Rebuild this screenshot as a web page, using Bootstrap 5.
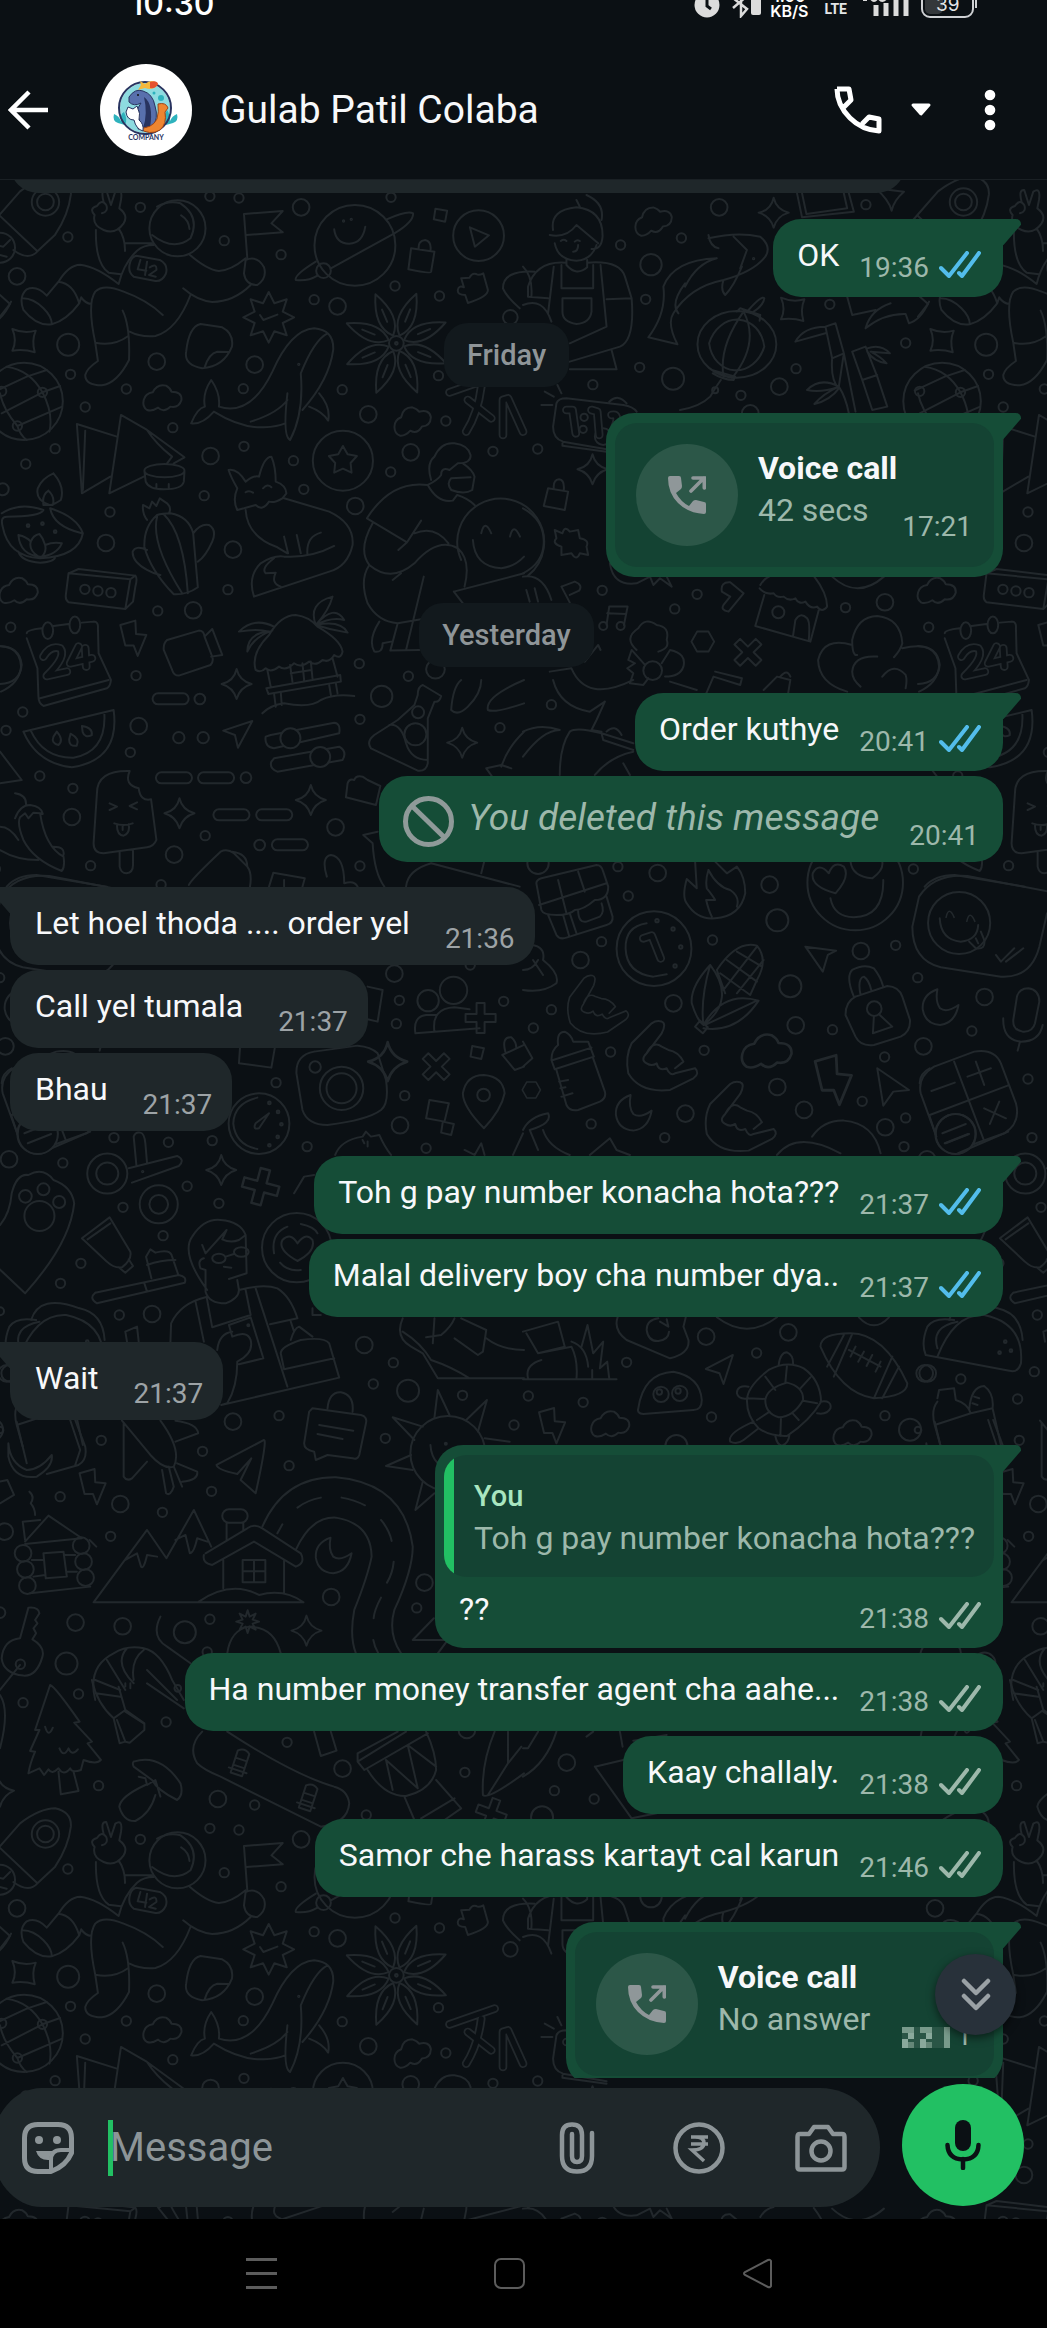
<!DOCTYPE html>
<html lang="en">
<head>
<meta charset="utf-8">
<meta name="viewport" content="width=device-width, initial-scale=1">
<title>Gulab Patil Colaba</title>
<link href="https://cdn.jsdelivr.net/npm/bootstrap@5.3.0/dist/css/bootstrap.min.css" rel="stylesheet">
<style>
:root{--night:#0b1014;--line:#22282c;--out:#154d37;--out-deep:#144333;--in:#1f272a;--soft:#9db8ab;--grey:#8d9598}
body{background:var(--night);color:#f7f8fa;font-family:Roboto,"Liberation Sans",sans-serif;font-size:32px;line-height:40px}
button{background:none;border:0;padding:0;color:inherit}
svg{display:block;flex:none}
.status{height:40px;padding:0 70px 0 130px;font-family:Inter,sans-serif;color:#e3e5e7}
.status .clock-time{font-size:32px;line-height:36px;font-weight:500;margin-top:-14px}
.status .two-line{font-size:16px;line-height:15px;font-weight:600;margin-top:-11px}
.status .lte{font-family:Roboto;font-weight:700;font-size:14px;line-height:14px;margin-top:-12px;text-align:center}
.status svg{margin-top:-12px}
.top-bar{height:140px;padding:0 48px 0 8px;border-bottom:1px solid #1a2024}
.avatar{width:92px;height:92px;background:#fff;overflow:hidden;margin-left:50px}
.contact{font-size:39px;line-height:48px;margin-left:28px}
.dial{gap:28px}
.more{margin-left:49px}
.wall{isolation:isolate;min-height:0}
.paper{top:0;left:0;width:100%;height:100%;z-index:-1;background:var(--night)}
.paper g{fill:none;stroke:var(--line);stroke-width:6;stroke-linejoin:round;stroke-linecap:round}
.paper .solid{fill:var(--night)}
.paper .fat{stroke-width:26}
.paper .core{stroke:var(--night);stroke-width:15}
.log{flex:1 1 0;min-height:0;overflow:hidden;padding:0 44px 0 10px}
.msg{position:relative;border-radius:28px;min-height:78px;margin-top:5px;max-width:86%;flex:none}
.msg p{margin:0;padding:16px 0 22px 24px}
.msg time{font-size:28px;line-height:32px;padding-bottom:10px;align-self:flex-end}
.sent{align-self:flex-end;background:var(--out)}
.sent time{color:var(--soft)}
.got{align-self:flex-start;background:var(--in)}
.got time{color:#9da3a6;padding-left:35px;padding-right:20px}
.got p{padding-left:25px}
.meta{gap:10px;padding:0 22px 0 20px;align-self:flex-end}
.meta time{padding-bottom:13px}
.meta svg{margin-bottom:19px}
.turn{margin-top:25px}
.tail::after{content:"";position:absolute;top:0;width:46px;height:26px;background:inherit}
.sent.tail{border-top-right-radius:0}
.sent.tail::after{right:-18px;border-top-right-radius:5px;clip-path:polygon(0 0,100% 0,100% 22%,62% 100%,0 100%);z-index:-1}
.got.tail{border-top-left-radius:0}
.got.tail::after{left:-18px;clip-path:polygon(0 0,100% 0,100% 100%,38% 100%,0 22%);z-index:-1}
.earlier{width:895px;max-width:none;margin-top:-65px}
.day{align-self:center;background:#12191d;color:#8f9598;font-size:29px;line-height:32px;font-weight:500;padding:16px 23px;border-radius:24px;margin:26px 0 1px}
.first{margin-top:26px}
.after-day{margin-top:25px}
.call{padding:10px 9px}
.call-box{background:var(--out-deep);border-radius:22px;height:144px;padding:0 22px 0 21px}
.ring{width:102px;height:102px;background:#2c5748;margin-right:20px}
.call-box .about{padding-bottom:13px}
.call-box .kind{font-weight:700;line-height:42px}
.call-box .note{color:var(--soft);line-height:42px}
.call-box time{padding-bottom:24px;margin-left:5px}
.call-box .apart{margin-left:32px}
.gone{min-height:86px}
.gone svg{margin:20px 14px 0 24px}
.gone p{font-size:37px;line-height:44px;font-style:italic;color:var(--soft);padding:20px 30px 20px 0}
.gone time{padding-right:24px}
.quote{background:linear-gradient(90deg,#22c063 10px,var(--out-deep) 10px);border-radius:22px;margin:10px 9px 0;padding:19px 19px 19px 30px;height:122px;line-height:42px;color:var(--soft)}
.quote b{color:#a9e6c0;font-weight:500;font-size:29px}
.reply p{padding:12px 0 19px 24px}
.down{right:31px;bottom:184px;width:81px;height:81px;background:#28313a;box-shadow:0 3px 8px #0008}
.compose{padding:6px 23px 12px 0;height:141px;gap:22px}
.field{height:119px;background:var(--in);border-radius:50px 60px 60px 50px / 60px;padding:0 33px 0 30px;margin:4px 0 0 -8px}
.caret{width:5px;height:56px;background:#22c063;margin:0 -3px 0 34px}
.field input{background:none;border:0;outline:0;color:#fff;font-size:40px;line-height:48px;width:10px;padding:0}
.field input::placeholder{color:var(--grey);opacity:1}
.tools{gap:70px}
.mic{width:122px;height:122px;background:#22c063}
.keys{height:109px;background:#000;padding:0 274px 0 246px}
</style>
<script defer src="https://cdn.jsdelivr.net/npm/bootstrap@5.3.0/dist/js/bootstrap.bundle.min.js"></script>
</head>
<body>
<svg width="0" height="0" class="position-absolute" aria-hidden="true">
  <symbol id="ticks" viewBox="0 0 42 27"><path d="M2 17l8 8L28 2M20 22l3 3L40 2" fill="none" stroke="currentColor" stroke-width="4" stroke-linecap="round" stroke-linejoin="round"/></symbol>
  <symbol id="outcall" viewBox="0 0 38 38"><path d="M0 2Q0 0 2 0H11Q13 0 13 2L14 10Q14 12 13 13L8 17Q13 26 21 30L25 25Q26 24 28 24L36 26Q38 26 38 28V36Q38 38 36 38Q20 37 10 27Q0 17 0 2Z" fill="#8f9799"/><path d="M23 15L36 2M25 2H36.300V12" fill="none" stroke="#8f9799" stroke-width="3.600" stroke-linecap="round"/></symbol>
</svg>
<div class="vh-100 d-flex flex-column overflow-hidden">
  <div class="status d-flex align-items-start">
    <span class="clock-time me-auto text-white">10:30</span>
    <svg width="26" height="30" viewBox="0 0 26 30"><circle cx="13" cy="17" r="12.500" fill="#dcdcdc"/><path d="M13 8V18L17 21" stroke="#0b1014" stroke-width="3" fill="none"/></svg>
    <svg class="ms-2" width="34" height="30" viewBox="0 0 34 30"><path d="M5 10L19 21L13 28V3L19 8L5 20" fill="none" stroke="#dcdcdc" stroke-width="2.500"/><rect x="23" y="4" width="10" height="23" rx="2" fill="#dcdcdc"/></svg>
    <span class="two-line text-white text-center ms-2">1.00<br>KB/S</span>
    <span class="lte ms-3">VO<br>LTE</span>
    <svg class="ms-3" width="50" height="30" viewBox="0 0 50 30"><path d="M13 17V28M23 15V28M33 8V28M43 0V28" stroke="#dcdcdc" stroke-width="5"/><path d="M0 12h4M8 11q3 4 6 0M16 11q3 4 7 0" stroke="#dcdcdc" stroke-width="2" fill="none"/></svg>
    <svg class="ms-2" width="56" height="30" viewBox="0 0 56 30" role="img" aria-label="Battery 39"><rect x="1" y="-6" width="51" height="35" rx="8" fill="none" stroke="#cfd1d4" stroke-width="2"/><rect x="4" y="-6" width="18" height="32" rx="5" fill="#34383b"/><path d="M55 10V20" stroke="#cfd1d4" stroke-width="2"/><text x="15" y="23" font-size="19" fill="#e3e5e7">39</text></svg>
  </div>
  <header class="top-bar d-flex align-items-center">
    <button type="button" aria-label="Back"><svg width="42" height="42" viewBox="0 0 42 42"><path d="M40 21H4M21 3L3 21L21 39" fill="none" stroke="#fff" stroke-width="4.500"/></svg></button>
    <div class="avatar rounded-circle">
      <svg width="92" height="92" viewBox="0 0 92 92">
        <circle cx="45" cy="44" r="25" fill="#8ddbe0"/><circle cx="61" cy="34" r="3" fill="#2eb2bd"/><circle cx="54" cy="29" r="1.500" fill="#2eb2bd"/>
        <path d="M18 59Q12 57 14 50Q19 52 21 57Q20 50 24 48Q28 56 25 61ZM73 59Q79 57 77 50Q72 52 70 57Q70 50 67 46Q62 54 66 61Z" fill="#2eb2bd"/>
        <circle cx="45" cy="44" r="26" fill="none" stroke="#28335f" stroke-width="2"/>
        <path d="M29 33Q35 24 43 27Q53 30 55 42Q59 54 52 65H38Q41 52 38 44L41 39Q34 43 29 38Z" fill="#5870ad" stroke="#28335f" stroke-width="1"/>
        <path d="M44 33Q54 40 50 64H43Q48 50 44 33Z" fill="#28335f"/><circle cx="38" cy="31" r="1" fill="#111"/>
        <path d="M58 40Q66 38 68 44L65 48Q67 60 60 66Q50 72 38 64Q52 65 57 55Q59 48 58 40Z" fill="#ee8530" stroke="#9c4518" stroke-width="1"/>
        <path d="M26 48L28 43L33 45L37 42Q41 50 39 56Q44 60 43 67Q36 65 34 56Q27 56 26 48Z" fill="#fff" stroke="#28335f" stroke-width="1"/>
        <path d="M40 17L45 20Q52 14 58 20Q54 27 45 24L38 26L41 21Z" fill="#f5b83d"/><path d="M50 18Q57 16 58 20Q56 25 50 24Z" fill="#e5522f"/>
        <text x="46" y="76" text-anchor="middle" font-size="7" font-weight="700" fill="#28335f" font-family="Lato,sans-serif">COMPANY</text>
      </svg>
    </div>
    <h1 class="contact fw-normal mb-0 me-auto">Gulab Patil Colaba</h1>
    <button type="button" class="dial d-flex align-items-center" aria-label="Voice call"><svg width="48" height="48" viewBox="0 0 48 48"><path d="M3 3H15L17 14L9 22M3 3Q3 19 16 32Q28 44 45 45V33L35 31L28 38" fill="none" stroke="#fff" stroke-width="5" stroke-linejoin="round"/></svg><svg width="22" height="14" viewBox="0 0 22 14"><path d="M3 2H19L11 11Z" fill="#fff" stroke="#fff" stroke-width="3" stroke-linejoin="round"/></svg></button>
    <button type="button" class="more" aria-label="More options"><svg width="18" height="44" viewBox="0 0 18 44" fill="#fff"><circle cx="9" cy="7" r="5.300"/><circle cx="9" cy="22" r="5.300"/><circle cx="9" cy="37" r="5.300"/></svg></button>
  </header>
  <main class="wall position-relative flex-grow-1 d-flex flex-column">
    <svg class="paper position-absolute" aria-hidden="true"><defs><g id="doodles"></g></defs>
      <use href="#doodles" y="-180"/><use href="#doodles" x="-918" y="-180"/><use href="#doodles" x="918" y="-180"/><use href="#doodles" y="1452"/><use href="#doodles" x="918" y="1452"/><use href="#doodles" x="-918" y="1452"/>
    </svg>
    <div class="log d-flex flex-column">
      <div class="msg got earlier"></div>
      <div class="msg sent tail first d-flex"><p>OK</p><span class="meta d-flex align-items-end"><time>19:36</time><svg width="42" height="27" color="#53bdeb"><use href="#ticks"/></svg></span></div>
      <div class="day">Friday</div>
      <div class="msg sent tail after-day call"><div class="call-box d-flex align-items-center"><span class="ring rounded-circle d-flex align-items-center justify-content-center"><svg width="38" height="38"><use href="#outcall"/></svg></span><span class="about d-flex flex-column"><span class="kind">Voice call</span><span class="note">42 secs</span></span><time>17:21</time></div></div>
      <div class="day">Yesterday</div>
      <div class="msg sent tail after-day d-flex"><p>Order kuthye</p><span class="meta d-flex align-items-end"><time>20:41</time><svg width="42" height="27" color="#53bdeb"><use href="#ticks"/></svg></span></div>
      <div class="msg sent gone d-flex"><svg width="51" height="51" viewBox="0 0 51 51"><circle cx="25.500" cy="25.500" r="23" fill="none" stroke="#8f9a99" stroke-width="5"/><path d="M9 10L42 42" stroke="#8f9a99" stroke-width="5"/></svg><p>You deleted this message</p><time>20:41</time></div>
      <div class="msg got tail turn d-flex"><p>Let hoel thoda .... order yel</p><time>21:36</time></div>
      <div class="msg got d-flex"><p>Call yel tumala</p><time>21:37</time></div>
      <div class="msg got d-flex"><p>Bhau</p><time>21:37</time></div>
      <div class="msg sent tail turn d-flex"><p>Toh g pay number konacha hota???</p><span class="meta d-flex align-items-end"><time>21:37</time><svg width="42" height="27" color="#53bdeb"><use href="#ticks"/></svg></span></div>
      <div class="msg sent d-flex"><p>Malal delivery boy cha number dya..</p><span class="meta d-flex align-items-end"><time>21:37</time><svg width="42" height="27" color="#53bdeb"><use href="#ticks"/></svg></span></div>
      <div class="msg got tail turn d-flex"><p>Wait</p><time>21:37</time></div>
      <div class="msg sent tail turn reply"><div class="quote"><b>You</b><br>Toh g pay number konacha hota???</div><div class="d-flex justify-content-between"><p>??</p><span class="meta d-flex align-items-end"><time>21:38</time><svg width="42" height="27" color="#9db8ab"><use href="#ticks"/></svg></span></div></div>
      <div class="msg sent d-flex"><p>Ha number money transfer agent cha aahe...</p><span class="meta d-flex align-items-end"><time>21:38</time><svg width="42" height="27" color="#9db8ab"><use href="#ticks"/></svg></span></div>
      <div class="msg sent d-flex"><p>Kaay challaly.</p><span class="meta d-flex align-items-end"><time>21:38</time><svg width="42" height="27" color="#9db8ab"><use href="#ticks"/></svg></span></div>
      <div class="msg sent d-flex"><p>Samor che harass kartayt cal karun</p><span class="meta d-flex align-items-end"><time>21:46</time><svg width="42" height="27" color="#9db8ab"><use href="#ticks"/></svg></span></div>
      <div class="msg sent tail turn call"><div class="call-box d-flex align-items-center"><span class="ring rounded-circle d-flex align-items-center justify-content-center"><svg width="38" height="38"><use href="#outcall"/></svg></span><span class="about d-flex flex-column"><span class="kind">Voice call</span><span class="note">No answer</span></span>
        <time class="apart d-flex align-items-end"><svg class="mb-1" width="54" height="21" viewBox="0 0 54 21" role="img" aria-label="22:1" shape-rendering="crispEdges"><path d="M0 0H48V21H0Z" fill="#2a5546"/><path d="M0 0H12V6H0ZM18 0H30V6H18ZM42 0H48V21H42Z" fill="#789a8b"/><path d="M6 6H12V12H6ZM24 6H30V12H24ZM0 12H6V21H0ZM18 12H24V21H18Z" fill="#8aa99c"/><path d="M6 15H12V21H6ZM24 15H30V21H24Z" fill="#658778"/></svg>1</time></div></div>
    </div>
    <button type="button" class="down position-absolute rounded-circle d-flex align-items-center justify-content-center" aria-label="Scroll to latest"><svg width="30" height="34" viewBox="0 0 30 34"><path d="M3 3L15 15L27 3M3 18L15 30L27 18" fill="none" stroke="#9aa1a5" stroke-width="4.500" stroke-linecap="round" stroke-linejoin="round"/></svg></button>
    <form class="compose d-flex align-items-start">
      <div class="field flex-grow-1 d-flex align-items-center">
        <button type="button" aria-label="Stickers"><svg width="52" height="52" viewBox="0 0 52 52"><path d="M16 2.500H36Q49.500 2.500 49.500 16V31Q44 44 29 49.500H16Q2.500 49.500 2.500 36V16Q2.500 2.500 16 2.500Z" fill="none" stroke="#8d9598" stroke-width="5" stroke-linejoin="round"/><path d="M29 49V38Q29 28 39 28H49" fill="none" stroke="#8d9598" stroke-width="4"/><path d="M14 29H31Q27 32 28 38Q17 39 14 29Z" fill="#8d9598"/><circle cx="17" cy="18" r="4" fill="#8d9598"/><circle cx="35" cy="18" r="4" fill="#8d9598"/></svg></button>
        <span class="caret"></span><input class="flex-grow-1" type="text" placeholder="Message" aria-label="Message">
        <div class="tools d-flex align-items-center">
          <button type="button" aria-label="Attach" class="me-2"><svg width="36" height="52" viewBox="0 0 36 52"><path d="M33 11V34Q33 49.500 18 49.500Q3 49.500 3 34V13Q3 2.500 13 2.500Q23 2.500 23 13V34Q23 40 18 40Q13 40 13 34V12" fill="none" stroke="#8d9598" stroke-width="4.500" stroke-linecap="round"/></svg></button>
          <button type="button" aria-label="Pay"><svg width="52" height="52" viewBox="0 0 52 52"><circle cx="26" cy="26" r="23.500" fill="none" stroke="#8d9598" stroke-width="4.500"/><path d="M18 15H35M18 22H35M22 15Q31 15 31 21Q31 28 19 28L31 39" fill="none" stroke="#8d9598" stroke-width="3.500"/></svg></button>
          <button type="button" aria-label="Camera"><svg width="52" height="52" viewBox="0 0 52 52"><path d="M5 12H14L19 5H33L38 12H47Q49.500 12 49.500 15V45Q49.500 47.500 47 47.500H5Q2.500 47.500 2.500 45V15Q2.500 12 5 12Z" fill="none" stroke="#8d9598" stroke-width="4.500" stroke-linejoin="round"/><circle cx="26" cy="29" r="9.500" fill="none" stroke="#8d9598" stroke-width="4.500"/></svg></button>
        </div>
      </div>
      <button type="button" class="mic rounded-circle d-flex align-items-center justify-content-center" aria-label="Record voice message"><svg width="36" height="50" viewBox="0 0 36 50"><rect x="10" y="0" width="16" height="31" rx="8" fill="#0b1014"/><path d="M2.500 25Q3 39 18 39.500Q33 39 33.500 25M18 39V48" fill="none" stroke="#0b1014" stroke-width="4.500" stroke-linecap="round"/></svg></button>
    </form>
  </main>
  <nav class="keys d-flex align-items-center justify-content-between" aria-label="System">
    <button type="button" aria-label="Recents"><svg width="31" height="31" viewBox="0 0 31 31"><path d="M0 1.500H31M0 15.500H31M0 29.500H31" stroke="#5c5c5c" stroke-width="3"/></svg></button>
    <button type="button" aria-label="Home"><svg width="31" height="31" viewBox="0 0 31 31"><rect x="1" y="1" width="29" height="29" rx="6" fill="none" stroke="#5c5c5c" stroke-width="2"/></svg></button>
    <button type="button" aria-label="Back"><svg width="31" height="31" viewBox="0 0 31 31"><path d="M29 3V28Q28 30 26 29L3 17Q1 15.500 3 14L26 2Q28 1 29 3Z" fill="none" stroke="#5c5c5c" stroke-width="2"/></svg></button>
  </nav>
</div>
<script>
// The wallpaper is one 918 x 1632 block of line doodles, built in eight cells and repeated by <use>.
const small = 'cloud|M-45 35Q-60 25-55 5Q-50-15-28-18Q-15-45 12-38Q25-30 28-20Q60-20 58 5Q50 30 25 25Q5 45-12 28Q-30 40-45 35Z;bolt|M-40-40L5-53L7-13L38-10L12 53L0 22L-25 22Z;star|M0-45Q8-10 45 0Q10 10 0 45Q-10 10-45 0Q-8-8 0-45Z;gem|M-35-35Q0-20 35-30Q22 0 32 35Q0 25-35 30Q-20 0-35-35Z;plus|M-12-45H12V-12H45V12H12V45H-12V12H-45V-12H-12Z;moon|M-8-52Q-55-35-52 8Q-45 52 0 55Q45 50 55-5Q20 20 0 5Q-15-15-8-52Z;hand|M0-105Q15-100 0-70L-45-10Q-65 10-45 20Q-30 30-15 20Q-10 45 15 35Q25 60 40 50L100 35Q115 50 95 65L25 100Q-65 110-100 50Q-110 0-90-40L-30-100Q-15-110 0-105M-45-10Q-25-50 0-30L20-20Q50-15 65 15L40 35;petal|M0-25C-35-60-25-110 0-160C25-110 35-60 0-25M0-70V-110;seed|M0-20Q22 5 5 20Q-18 15-10-5Z;eye|M-15 15Q-5-30 15 15;hex|M-17-30H17L34 0L17 30H-17L-34 0Z;pod|M-18-35Q0-50 18-35V35H-18ZM-18-12H18M-18 10H18M-28 22H28'.split(';').reduce((o, s) => { const [k, d] = s.split('|'); o[k] = d; return o; }, {});
const burst = (cx, cy, n, R, r) => { let d = 'M'; for (let i = 0; i < 2 * n; i++) { const a = Math.PI * i / n - Math.PI / 2, q = i % 2 ? r : R; d += (cx + q * Math.cos(a)).toFixed(0) + ' ' + (cy + q * Math.sin(a)).toFixed(0) + (i < 2 * n - 1 ? 'L' : 'Z'); } return d; };
const cells = [
{x:0,y:180,
 s:'203,171 420,82 628,49 715,54 671,182 841,224 940,359 1182,318 1315,348 1170,52 211,583 378,627 255,681 728,626 1024,629 517,743 165,806 77,852 730,799 878,842 1169,876 1475,814 1334,723 1312,587 329,996 611,947 909,928 682,1229 472,1293 32,1342 407,1487 1075,1451 1222,1489 254,1228 293,1233 332,1238 127,637 52,738 5,634',
 m:'51,289 1010,379 469,545 762,554 1102,703 630,828 1229,817 317,1089 697,1109 1063,978 578,1291 901,82 968,272,22 204,494,33 8,928,18 1303,1468,28 136,66,41 136,66 0,203,45 531,145,84 1062,196,121 1432,167,76 1186,490,22 72,664,116 1026,842,90 1527,412,22 1028,123,2 1051,118,2 894,553,2 1186,490,4 84,1037,4 127,1031,4 165,1055,4',
 p:['M-20 126L60 34Q120-11 165-11Q215 0 212 44Q205 104 165 164L112 214Q85 244 40 210M0 108L112 214M0 345L30 372L0 410M-35 190L10 200L30 180M-20 220L20 230',
 'M455 165Q520 215 570 175Q600 110 540 70Q505 60 470 80M542 106Q565 120 567 147M310 65Q300 28 318 30L332 75L345 35Q368 20 362 60L357 85Q385 105 370 130Q345 165 310 150Q275 135 283 105Q265 85 290 78Q305 55 318 75Q325 95 305 100M287 150Q285 250 325 278L362 283M355 145Q375 175 374 213M374 190H455M175 305Q205 255 240 254Q290 260 355 312Q370 250 410 212Q430 195 460 195M565 222Q620 270 655 273Q690 272 735 235M735 240Q770 225 790 262Q800 295 770 315Q735 315 730 280ZM750 315Q700 365 635 366Q590 362 548 325M570 345Q530 450 465 468Q420 472 388 455M367 392Q390 440 386 540Q350 610 305 616Q255 616 255 585Q260 565 293 543L285 488Q260 370 285 335Q310 310 370 335Q440 360 487 405M285 488Q340 500 384 468M175 305L140 347Q110 315 80 328Q55 350 70 390Q110 440 155 433Q200 420 237 370L243 352Q255 370 273 372M175 305Q220 310 237 370M68 355Q100 355 130 385Q155 410 155 433',
 'M408 227L478 240Q505 255 496 282Q485 305 465 303L400 290Q380 275 390 245Q395 230 408 227M420 240L412 268L438 272M440 245L434 285M448 262Q470 248 468 270L446 285L466 290M740 235L730 102L846 93L812 130L846 157L737 165',
 'M1000 148Q1005 190 1045 191Q1085 190 1093 140M1157 118Q1220 90 1236 100Q1238 125 1180 160L990 265M945 245Q880 285 885 300Q920 305 950 287M1303 86L1338 92L1332 125L1298 118ZM1406 142L1463 166L1421 200ZM1230 205L1300 215L1290 275Q1288 282 1222 268ZM1253 208Q1250 182 1272 180Q1292 184 1288 212M1380 295L1405 293Q1412 278 1425 282Q1432 288 1446 280L1460 330Q1460 350 1400 369L1392 345Q1368 345 1370 330Q1372 315 1388 322ZM1600 275Q1505 270 1505 325Q1515 350 1555 385',
 burst(804,412,8,76,45)+'M778 405L788 420L830 404M600 432L665 442Q700 460 694 500Q670 560 605 565Q550 555 557 515Q565 440 600 432M612 563Q625 520 650 515L685 516',
 'M572 730Q590 685 613 680Q605 640 632 600Q660 640 655 680Q750 710 815 575Q870 450 940 445Q1000 450 997 510Q985 600 905 690M572 730Q605 735 640 695Q720 745 790 742Q830 740 853 730M980 460Q940 480 900 580Q910 700 868 780Q845 770 860 640M860 660Q830 700 750 725M955 640Q990 680 982 722Q965 695 925 680',
 'M-10 632L80 590L140 570M127 637L180 618M127 637L5 700M52 738L186 680M127 637Q160 700 148 755M20 560Q90 570 127 637M52 738Q10 690 0 640M52 738Q60 765 80 780',
 'M230 732L350 770M230 732L245 940L330 890M255 752L248 930M362 705L327 940L430 890M362 705L440 750L552 832L520 850M440 750Q465 790 515 830L500 850M432 872A60 20 0 0 1 552 872A60 20 0 0 1 432 872L436 905Q445 928 490 928Q545 928 550 905L552 875M468 912V925M505 912V925',
 burst(1026,842,5,44,24),
 'M160 880Q195 920 182 960Q160 975 148 975Q105 960 113 925Q125 895 160 880M145 932Q165 950 158 975L130 975Q125 945 145 932M5 1000Q60 965 130 990Q120 1010 20 1010Q0 1010 8 1040Q25 1130 120 1135Q235 1130 248 1060Q230 1010 150 985Q160 1040 245 1060M55 1065Q80 1070 92 1085Q100 1065 118 1062Q130 1075 135 1095Q160 1085 185 1090Q170 1125 120 1130Q60 1125 55 1065M92 1085Q85 1110 115 1130M135 1095Q140 1115 125 1130M55 1115Q65 1145 120 1148Q165 1145 165 1130',
 'M205 1180L235 1167L405 1187Q412 1195 405 1220L398 1265L375 1287L205 1267Q195 1260 197 1245L205 1180L390 1198L375 1287M390 1198L405 1187M470 1005Q430 1040 432 1100Q450 1170 520 1243Q560 1245 592 1222L578 1060Q565 1010 510 1000Q485 1000 470 1005M470 1010Q450 1090 545 1240M490 1003Q550 1060 562 1240M440 1020Q425 1000 428 975L447 985L455 965L468 978L478 955L500 970Q515 985 505 1000M578 1060Q600 1030 625 1035Q650 1050 635 1085Q615 1130 592 1145M440 1110Q405 1095 397 1115Q395 1145 440 1170Q460 1182 480 1185',
 'M684 870Q710 865 735 905Q760 885 775 890Q790 830 812 830Q825 860 825 905Q855 915 857 940L845 955Q820 970 805 965Q785 995 765 975L730 985L710 990Q695 960 710 925Q690 890 684 870M735 937Q745 930 757 938M787 925Q800 910 812 922M735 990Q740 1070 830 1102L860 1120M850 955L985 995Q1060 1030 1055 1095Q1040 1160 985 1175L760 1250Q740 1190 780 1150Q820 1125 850 1130Q930 1135 1000 1098M850 1070L862 1120M888 1065L900 1120M920 1125Q915 1070 960 1058M820 1135Q780 1165 795 1180L825 1178Q810 1210 840 1220',
 'M1290 900Q1275 850 1300 830Q1320 785 1360 790Q1400 795 1408 825Q1410 850 1370 850L1345 870Q1320 860 1320 885Q1310 900 1280 915M1385 850Q1415 870 1420 890L1413 930Q1390 945 1350 930Q1335 910 1350 895L1408 892M1280 915Q1310 970 1355 962L1368 945Q1400 955 1420 975M1280 915Q1170 900 1098 1015L1218 1087L1260 1022M1115 1030Q1070 1110 1105 1155Q1170 1210 1240 1150Q1310 1070 1370 1105Q1410 1140 1390 1220M1105 1155Q1075 1200 1100 1270Q1130 1325 1190 1330L1260 1318M1240 1060Q1300 1035 1342 1090M1192 1110L1218 1087M1175 1200L1200 1180M1268 1190L1215 1410M1190 1330L1168 1412L1255 1410M1135 1325Q1100 1380 1120 1415Q1145 1420 1145 1390L1170 1385M1380 1140A130 130 0 1 1 1580 1187M1415 1080Q1420 1160 1500 1165Q1540 1160 1568 1130M1358 1235L1568 1180M1358 1235L1385 1270',
 'M80 1360Q80 1350 125 1345M160 1338L205 1332M245 1328L280 1325Q295 1325 293 1345L295 1420L332 1500Q330 1520 320 1525L130 1578Q115 1570 115 1550L112 1465L80 1375M120 1555L325 1500M127 1352A16 25 0 0 1 159 1352A16 25 0 0 1 127 1352M208 1335A16 25 0 0 1 240 1335A16 25 0 0 1 208 1335M500 1380L595 1352Q610 1352 612 1370L635 1430Q640 1445 630 1455L535 1487Q520 1487 515 1470L490 1410Q488 1390 500 1380M612 1370L635 1347L665 1425L632 1430M0 1398Q60 1400 65 1455Q60 1510 0 1512',
 'M765 1470Q750 1420 805 1365Q840 1305 885 1305Q925 1310 950 1340Q1020 1380 1025 1415Q1020 1440 1000 1425Q985 1450 965 1440Q945 1460 925 1445Q900 1465 880 1450Q855 1475 835 1460Q810 1480 795 1465Q780 1480 765 1470M800 1470L810 1520M995 1435L1010 1490M797 1525L1018 1485L1020 1505L803 1542ZM868 1455L875 1505M905 1450L910 1500M930 1445L935 1495M870 1480L932 1470M945 1335Q920 1270 995 1250Q985 1290 945 1335Q1000 1270 1030 1320Q990 1310 945 1335Q1020 1320 1040 1358Q990 1350 945 1335M820 1340Q760 1310 715 1355Q770 1345 805 1355Q740 1360 740 1415Q760 1370 815 1352'],
 f:['M130 1430Q150 1395 180 1405Q200 1430 140 1488L200 1475','M235 1400L210 1450L275 1435M255 1405L258 1460','M1345 637L1480 590M1400 660L1470 715M1440 620Q1430 700 1395 755M1505 765V660L1520 655L1565 755'],
 u:'cloud,485,655 cloud,1232,722,-15 cloud,55,1233 bolt,400,1375 star,708,1512 gem,72,482 eye,1455,1045 eye,1541,1055 petal,1186,490,22 petal,1186,490,67 petal,1186,490,112 petal,1186,490,157 petal,1186,490,202 petal,1186,490,247 petal,1186,490,292 petal,1186,490,337'},
{x:523,y:180,
 s:'292,195 367,358 474,174 1026,74 918,373 817,566 652,646 209,614 349,562 1145,489 44,807 237,1231 454,1287 521,1243 965,1283 240,1338,12 292,1338,12 183,712,11 180,748,11 575,631,9',
 m:'383,254,32 587,82 449,596,33 767,620 1083,1267 764,1297,18 388,1472,28 690,236,2 680,700 240,770',
 p:['M90 150Q80 90 160 82Q240 90 238 170Q235 210 205 207M80 165Q130 175 160 135L225 190M95 190Q105 240 160 242Q205 240 220 195M113 183Q122 176 130 183M155 185Q162 178 170 183M150 215Q165 215 165 195M130 238V255Q160 290 192 262V240M130 248Q40 240 15 320V350L75 355M192 248Q290 240 305 290L325 355L250 358M92 260L75 400M232 255L250 440L140 490M115 255V325H210V255M118 355H205V395Q200 430 160 432Q118 425 118 395ZM325 355Q335 480 290 500L140 545M265 510L280 568H140M0 375Q60 350 85 425M0 260Q30 290 25 350M160 60L170 80M190 45Q245 70 235 120',
 'M555 175Q640 155 710 170Q745 200 725 230Q690 275 600 300Q500 320 450 400Q430 430 462 493L375 472Q430 400 420 320Q450 240 580 235Q520 250 485 320M555 165Q560 200 585 205M630 170L670 210L650 265M600 300Q590 330 605 345Q630 320 655 260M485 310Q440 370 465 400',
 'M522 493A118 100 0 0 1 758 493A118 100 0 0 1 522 493M557 490A85 100 8 0 1 722 500A85 100 8 0 1 557 490M600 590Q585 500 660 395Q710 490 625 595M640 395L650 385L710 405L708 422M675 390Q715 345 722 355Q720 375 690 395M565 570L635 590L630 600Q600 600 568 580M592 600L575 625L560 650Q530 680 470 690',
 'M905 440L935 430L960 520L945 620Q965 650 975 700M905 440L925 535Q920 600 945 625M925 535L960 520M960 520L995 695M905 440Q840 440 815 485L905 460M945 620Q890 590 850 630Q890 640 945 620Q900 640 872 672Q920 660 945 625M985 515L1025 500L1060 590L1090 680L1045 690L1015 600ZM1015 600L1060 585M1030 505Q1070 490 1098 520L1040 515Q1070 530 1088 550Q1050 545 1030 515M970 350L985 405L1055 390M1215 365Q1190 420 1155 430L1145 402Q1080 400 1025 445Q1040 390 1100 370M820 40L835 112L990 95L975 40M835 40L848 102L970 85L960 40M1055 25L1140 35Q1110 60 1103 92Q1095 60 1055 25',
 'M90 740L100 670Q105 655 130 655L300 675Q330 680 340 695M90 740Q90 775 120 785L250 808M118 790V797L250 815M258 665Q285 640 310 670M65 635L92 650M55 675H88M103 615L115 640M75 925L135 935L125 990L62 978ZM92 925Q90 900 108 898Q125 900 122 930M95 1050L118 1060Q125 1035 140 1055L165 1050L170 1075Q200 1080 190 1100L195 1125L170 1120Q160 1145 145 1120L115 1125L115 1100Q85 1090 100 1075ZM0 985Q65 1020 62 1090Q60 1150 0 1180M0 1190Q60 1180 85 1260M10 1230L20 1265M35 1225L45 1265',
 'M595 1235Q590 1205 620 1207L660 1240L615 1295Q590 1290 600 1275L620 1250ZM115 1220L140 1268M115 1220L155 1205Q180 1215 168 1232L140 1245M250 1335L258 1280L313 1280L302 1335M252 1300L308 1302M185 1445L225 1395L232 1410M710 1215Q725 1190 750 1185M870 1188Q910 1240 910 1280Q895 1300 880 1280Q860 1290 845 1265Q825 1275 815 1255Q795 1265 780 1250Q760 1255 750 1240Q725 1245 708 1225M722 1245L695 1338L860 1385L885 1290M808 1368L815 1320Q830 1295 850 1315Q860 1325 855 1382M925 1190Q1000 1260 1080 1190M260 1150Q270 1220 340 1210L380 1190L390 1215L410 1195L445 1220L430 1190',
 'M1000 1425Q985 1430 985 1380Q1000 1310 1060 1308Q1130 1315 1135 1390Q1130 1410 1110 1432M985 1395Q900 1370 883 1440Q885 1510 970 1535M1135 1405Q1240 1380 1245 1460Q1240 1510 1185 1535M1060 1430Q990 1425 985 1475Q985 1500 1010 1520M1075 1490Q1110 1445 1145 1485Q1150 1500 1145 1525M340 1410Q300 1375 345 1345Q365 1310 400 1335Q440 1340 430 1380Q440 1405 405 1415M415 1450L440 1410Q490 1420 480 1460Q470 1490 425 1490M365 1455L325 1410L315 1440L335 1450L312 1465L330 1480L320 1510L360 1515L375 1495M80 1475L145 1465Q190 1570 330 1500M440 1505L520 1530M540 1560L570 1490L650 1515M575 1475L655 1495L650 1515M720 1530L760 1490L800 1500L790 1560M770 1490Q790 1465 800 1490'],
 f:['M130 690L148 690L158 760','M205 690L222 695L228 765','M265 705Q290 700 275 740'],
 u:'cloud,388,122,-15 star,750,98 star,208,868 gem,807,388 hex,538,1385 plus,673,1417,45'},
{x:0,y:680,
 s:'68,96 18,151 119,288 218,325 390,217 598,57,16 535,173,17 608,173,17 736,293,16 614,467 777,495,16 271,557 1077,118 1077,558 482,614 341,1373 188,1449 504,1387 635,1382 560,1519 919,1400 826,1208 1211,1247 1275,1405 1186,1031 1195,961 1507,964 1496,143 1407,855',
 m:'415,138 215,411 521,524 1004,442 1142,49,32 1180,881 1197,1336 27,1438 1251,97,18 1243,163,33 1357,931,41 1281,962,32 1022,1225,65 1022,1225,45 943,1161,17 775,1331,91 1447,1245,19 321,1481,60 321,1481,33 112,1362,60 806,1269,4 832,1296,4 842,1333,4 831,1371,4 806,1396,4 427,1475,2',
 p:['M70 155L340 90Q360 240 215 262Q110 250 70 155M92 152Q130 235 220 233Q320 215 312 97M473 40H548A16 16 0 0 1 548 73H473A16 16 0 0 1 473 40M483 277H558A16 16 0 0 1 558 310H483A16 16 0 0 1 483 277M609 277H684A16 16 0 0 1 684 310H609A16 16 0 0 1 609 277M655 388H730A16 16 0 0 1 730 421H655A16 16 0 0 1 655 388M783 388H858A16 16 0 0 1 858 421H783A16 16 0 0 1 783 388M830 478H905A16 16 0 0 1 905 511H830A16 16 0 0 1 830 478',
 'M810 165L1000 128Q1020 130 1015 160L820 205Q790 200 795 170ZM820 235L1015 200Q1040 215 1025 240L830 275Q805 265 812 245ZM668 152L755 123L712 203L703 165ZM1265 15L1320 48Q1315 68 1300 65L1280 115V250Q1275 275 1250 272L1110 205Q1095 185 1120 165L1190 120L1240 75L1250 45Q1250 20 1265 15M1165 135Q1200 130 1215 190Q1230 240 1280 240M0 215L65 300L0 310',
 'M45 415Q60 375 90 375Q125 380 128 402L120 400Q135 500 190 530Q195 560 185 573Q100 540 70 480Q50 430 60 412L75 400L85 415L100 398L120 400M45 340Q80 345 78 375M0 440Q30 440 55 480M0 510Q50 540 115 540M160 500Q195 500 190 525M290 340Q290 270 388 273Q370 315 415 325Q420 365 452 358L468 480Q460 500 440 502L310 520Q280 520 280 490ZM358 515V560Q362 580 378 580Q398 578 398 555V510M328 370L350 380L328 390M410 367L388 378L410 388M342 430Q370 440 397 430M350 437Q350 465 370 467Q390 460 385 433M367 437V450',
 'M1040 310Q1045 295 1060 300Q1065 285 1085 290L1100 300L1138 318L1125 375L1035 352ZM565 615Q570 600 660 515Q680 505 700 520L740 560Q755 580 748 620M695 515Q740 520 740 560M805 620L818 578L912 595L905 620M850 600V620M978 590Q960 530 990 525Q1030 530 1030 610Q1060 600 1070 620M1130 455L1087 465L1115 490Q1120 580 1150 620M1215 620Q1220 570 1290 550L1555 620M1450 540L1440 580M20 620Q50 585 110 585L320 620',
 'M820 40L825 80M840 35L843 75M785 100Q810 75 850 70Q930 85 960 60Q1000 40 1060 48M985 15L990 45M1005 10L1010 40M1350 90Q1355 20 1380 0M1350 90Q1370 110 1400 80Q1440 40 1440 0M1460 90Q1450 50 1568 0M1460 90Q1480 100 1568 70M1500 260Q1520 200 1568 155M1455 265L1500 255L1530 265M1455 265L1480 300',
 'M1243 1060Q1235 1010 1275 1005L1305 1005M1300 1055Q1290 985 1360 982L1405 988M1243 1060L1435 1045M1100 920L1145 930L1130 1025L1100 1018M940 1115L1070 1097Q1110 1100 1130 1120L1155 1200Q1165 1270 1140 1290Q1100 1320 980 1335Q920 1335 905 1290L887 1180Q885 1125 940 1115M718 1105L715 1150L812 1163L822 1105M770 1253Q700 1270 698 1331Q705 1395 770 1407M805 1300L765 1330Q755 1350 775 1345ZM1413 1098L1448 1105L1440 1137L1408 1130ZM1503 1125L1568 1095M1503 1125L1540 1170L1568 1160M1512 1115Q1500 1070 1530 1072Q1545 1085 1545 1105',
 'M1448 1345Q1385 1280 1385 1240Q1395 1185 1448 1185Q1505 1190 1510 1240Q1500 1290 1448 1345M1285 1260L1343 1270L1330 1325L1275 1315ZM1325 1325L1358 1332L1350 1365L1320 1358ZM1003 1425Q1020 1380 1085 1370L1095 1355L1110 1370L1135 1365Q1150 1400 1170 1425M1085 1380L1090 1390M1100 1385V1400M385 1465L530 1428Q555 1440 535 1458L395 1508M400 1370Q405 1355 420 1358Q432 1360 435 1390L440 1450M400 1370L408 1455M80 1390L150 1362M120 1420L270 1355M35 1310L55 1370M5 1210Q5 1180 35 1165M1565 1360L1535 1425M1390 1410L1420 1425L1440 1390L1450 1425M880 1540L910 1490L940 1485'],
 u:'seed,170,175 seed,218,180,-20 seed,258,153,-40 star,537,400 star,930,360 star,1383,188 star,662,1470 star,1160,1145,0,1.3 plus,1438,1014 plus,1305,1160,45 plus,780,1520,15,1.2',
 c:'869,175,30 958,231,30'},
{x:523,y:680,
 s:'85,74 284,560 315,648 235,785 567,780 1115,796 1168,567 1181,893 85,989 31,1044 262,1116 542,1111 926,1049 1082,1131 1015,1264 1145,1314 1140,1400 204,1332 424,1373 1343,1053 1511,1197',
 m:'403,579 738,614 761,721,33 1011,813 172,840 450,970 800,919,33 816,1036 486,1301 761,1221 841,1290 1084,1342 1198,1099 1381,951 392,806,112 401,722,5 449,747,5 472,801,5 455,858,5 994,608,143 1305,729,93 1051,986,22 45,550,32',
 p:['M0 155Q50 130 110 150Q60 150 0 230M245 65L220 120L205 150L235 155M110 285Q110 200 140 155Q160 140 235 160L330 190M235 160L240 180L330 210M250 155Q275 130 295 165M215 285Q260 230 330 215M90 0Q110 80 200 95L245 65M300 250L320 285',
 'M40 610Q40 600 55 595L220 555Q235 555 240 575L255 620Q255 660 215 660Q180 690 155 690Q140 705 100 705Q60 705 55 690ZM48 675L250 610M105 600L130 700M165 575L185 635M75 705L100 765Q110 780 130 773L250 735Q270 730 268 710L250 650M165 690Q165 730 190 725L230 710Q245 695 235 670M120 705L138 768M140 700L160 760M370 730Q305 740 307 806Q310 880 390 890L430 883',
 'M515 545L520 625L490 597Q475 650 490 670Q520 720 575 715Q650 710 665 640Q665 590 640 560L610 580Q590 560 575 545M555 570Q545 600 550 625Q570 650 575 660L548 660Q555 690 565 710M555 570Q580 620 620 630Q650 650 640 680M920 655Q930 710 990 712Q1080 710 1078 600M935 640Q860 620 867 580Q885 545 915 580Q930 540 960 560Q980 590 935 640M980 545Q985 590 1045 595Q1080 570 1075 545',
 'M1640 648L1330 588Q1230 580 1185 650L1165 740Q1165 840 1250 862L1430 890Q1520 895 1545 800L1568 700M1247 715Q1250 780 1310 785Q1360 780 1362 735M1335 785L1355 805Q1385 810 1380 780L1370 755M1355 775L1362 790M1415 825L1430 845L1470 805M1445 845L1497 805',
 'M560 855Q500 920 505 970Q520 1020 540 1035Q640 960 560 855M560 855Q530 960 540 1035M540 1035Q600 930 705 962Q640 1060 540 1045M545 1035L700 962M580 870Q640 780 700 797Q735 840 700 900L680 945M580 870L605 940M610 840L700 905M590 880L680 945M640 815L715 860M700 800L600 930M720 840L640 940M515 1040L530 1022L553 1042L538 1060ZM845 800L937 812L912 825L897 875Z',
 'M995 950L1090 918Q1125 920 1135 950L1158 1020Q1160 1055 1130 1070L1050 1095Q1010 1100 995 1070L965 1005Q965 965 995 950M990 950Q965 890 985 870Q1020 850 1050 865Q1070 890 1078 920M1010 945Q1000 895 1020 890Q1035 900 1042 930M1050 1008L1047 1060L1105 1040L1065 1003',
 'M105 1095Q100 1055 125 1055Q145 1065 150 1085L195 1085L212 1130L95 1168L85 1140Q85 1110 105 1095M90 1140L205 1103M100 1170L130 1275Q140 1295 165 1290L230 1265Q250 1255 245 1235L210 1135M108 1205L135 1200M115 1250L148 1240M112 1225L127 1222M0 1085L28 1135L0 1160M0 795Q70 790 60 840Q110 880 100 910Q60 940 0 930M200 1425L260 1375L280 1410L320 1425M0 1350Q20 1310 75 1300Q90 1330 20 1350L45 1410M60 1350Q75 1400 140 1425M30 840L60 885M0 870Q30 870 45 840',
 'M1060 1165L1155 1230L1108 1235L1078 1277ZM1230 1160L1350 1115Q1410 1105 1430 1150L1475 1270Q1490 1330 1440 1360L1350 1392M1230 1160Q1180 1190 1190 1240L1235 1365M1290 1145L1378 1378M1217 1305L1450 1217M1222 1233L1292 1208M1330 1190L1400 1165M1355 1145L1380 1215M1380 1285L1445 1315M1425 1265L1397 1332M1478 950Q1485 925 1512 925Q1545 930 1545 965L1532 1030Q1525 1057 1495 1055Q1465 1050 1467 1020ZM1437 1015Q1435 1080 1490 1085Q1545 1085 1555 1035M1487 1085L1480 1112M760 1425Q820 1350 950 1420M865 1370Q900 1320 960 1322Q1050 1330 1070 1420'],
 f:['M360 775L385 767L412 835'],
 u:'cloud,728,1115,0,1.3 moon,1248,980 moon,330,1297 hand,415,1130 hand,220,975,-8,.85 hand,650,1312 eye,1278,700,0,.8 eye,1340,712,0,.8 hex,25,1230,0,.8 bolt,930,1200,0,1.4',
 c:'1295,1362,60', after:'M1255 1360L1325 1332M1265 1390L1335 1362'},
{x:0,y:1180,
 s:'368,82 488,167 655,70 242,250 181,310 357,405 1177,548 1117,612 1384,646 835,707 865,857 606,814 633,934 303,781 180,950 486,997 331,1069 1153,775 1538,735 1247,1284 628,1318 620,1416 61,1453 0,394,12',
 m:'455,402 1090,495 1221,632,33 697,725 360,972 14,1055 991,1251 1270,1208 367,1339 553,1357,33 226,1328 199,1451,33 0,1298,16 118,108,45 76,49,19 130,28,18 177,66,18 475,73,57 475,73,28 888,203,104 1340,820,112 1334,791,3 69,1120 76,1168 82,1217 243,1097 250,1145 256,1193 743,436,3 20,580 0,750,10',
 p:['M0 135Q30 100 35 40Q50-20 85-15Q130-40 160 0Q215 20 222 70Q210 190 75 340L-30 240M245 175L328 112L390 215Q395 240 365 262Q340 265 320 245ZM262 178L330 130M355 262L375 278L398 258L385 238M285 338L535 285Q560 290 553 308L290 370Q265 355 285 338M432 310L440 335M453 295L437 230L450 208L465 218Q510 205 515 230L533 283M440 255Q480 240 525 240M375 455L410 440L415 485M375 455L380 485',
 'M620 330Q540 220 575 170Q610 115 660 120Q720 125 735 165L715 180Q690 190 665 178L678 150L615 220L605 195M735 165L738 280L685 297M635 235A20 14 0 0 1 675 235A20 14 0 0 1 635 235M700 216A22 14 0 0 1 744 216A22 14 0 0 1 700 216M675 230L700 222M670 260L692 263M610 235Q590 240 600 265L615 270V335Q625 370 675 370Q715 355 715 330L710 300M615 352Q540 370 512 430L510 485M585 365L610 485M735 330L750 405L635 442L618 350M715 330Q790 310 830 325Q870 350 890 415L808 433M765 325L860 620M685 435L750 412L788 535L715 553M685 435L695 470Q740 450 750 480Q760 520 710 545Q710 620 680 670L662 675L1015 593L985 490Q970 470 900 480Q840 500 840 520L850 568L1000 535M650 510Q655 460 695 455M870 480Q880 445 895 440L935 470M870 425L880 455',
 'M820 220Q810 160 860 140M900 132Q940 140 950 160M838 248Q860 275 900 270M890 243Q830 210 845 180Q870 155 890 190Q915 155 935 180Q945 215 890 243M935 385V405H960',
 'M50 725L80 850M225 720L255 800Q262 840 235 855L140 882M210 720L240 810L225 855M25 790Q30 850 80 870Q120 870 155 825Q160 860 110 890Q40 900 25 830ZM365 722L450 825Q490 870 520 860Q545 810 480 722M370 730V890Q380 905 395 895L440 845M525 722Q590 730 593 760L525 785M485 870L497 940Q510 950 520 920L505 860M520 860L545 920M530 850L590 875Q595 900 545 905M648 855L790 780Q800 780 765 940L720 900L752 835L710 882Q650 870 648 855',
 'M935 685L1080 705Q1100 710 1095 730L1075 825Q1070 840 1055 835L980 825L945 840L940 815Q910 810 910 790L925 695ZM980 685Q985 635 1020 637Q1060 645 1055 695M955 735L1057 752M950 762L1025 777M1265 740L1175 712L1240 780M1300 712L1310 630L1345 705M1395 720L1457 660L1430 755M1450 775L1525 785M1230 825L1155 858L1235 870M1265 905L1243 990L1300 940M1288 795Q1290 830 1310 850',
 'M1205 415Q1180 470 1230 500L1265 520L1310 595H1568M1205 455Q1260 490 1290 540Q1350 560 1405 595M1300 415L1295 490M1275 472L1320 465Q1350 440 1360 415M1360 475L1430 525L1445 515L1455 450L1380 415M1455 475Q1500 510 1568 510',
 'M280 1267L440 1050L498 1135L580 990L632 1100M280 1267H908M375 1140L410 1120L422 1160Q430 1170 440 1125L470 1130M525 1080L555 1065L568 1120Q580 1120 590 1075L620 1085M615 1120L740 1045Q760 1030 785 1045L900 1120Q915 1150 885 1160L760 1085L635 1155Q605 1150 610 1125M678 1080V1030M728 1050V1030M685 988H721A20 20 0 0 1 721 1028H685A20 20 0 0 1 685 988M668 1140V1225M850 1140V1238M726 1140H794V1207H726ZM760 1140V1207M726 1174H794M595 1265Q690 1200 775 1245Q850 1225 908 1267',
 'M785 1040Q850 890 1005 892Q1210 910 1235 1100Q1235 1170 1180 1290Q1160 1360 1200 1420M885 1110Q930 1010 1005 1013Q1110 1030 1112 1130Q1100 1190 1060 1290Q1045 1370 1065 1420M890 983Q920 960 960 953M1022 953Q1060 960 1092 976M1140 1020Q1165 1050 1172 1083M1178 1145Q1175 1180 1158 1208M1140 1253Q1120 1290 1118 1315M1117 1380Q1120 1400 1132 1420M830 1060L845 1033M1235 1380L1298 1315M1235 1380H1340L1310 1420',
 'M75 1085L145 1007L245 1075L75 1092M75 1080L68 1025L120 1020M88 935Q105 950 92 970Q105 985 105 1005M130 1120L190 1115L200 1190L137 1195ZM90 1240L270 1220M95 1140H128M195 1125H225M100 1190L135 1185M200 1175H230M85 1283Q115 1280 118 1300L105 1320L112 1330L100 1345L108 1360L97 1378Q135 1400 127 1430Q110 1490 70 1487Q10 1480 5 1435Q10 1380 60 1375ZM0 905L22 900L42 945L0 970M0 1530L60 1455',
 'M340 1420Q380 1395 430 1405Q480 1415 515 1500L550 1560M340 1420Q260 1460 285 1560M285 1500L360 1530M320 1440L375 1530M380 1405Q340 1450 400 1510M430 1410Q390 1440 400 1500M440 1470L530 1560M375 1520V1510M390 1525V1510M680 1420Q690 1350 745 1340Q820 1340 840 1420M480 1310Q450 1370 500 1400L570 1450'+burst(741,1325,8,34,16)],
 u:'bolt,278,920 star,917,1352 moon,997,1125'},
{x:523,y:1180,
 s:'310,547 16,648 180,667 564,711 699,519 1083,707 1530,575 1310,597 1480,657',
 m:'548,470 794,457 1211,580 1158,749,33 459,798,33 413,643,23 469,640,23 408,636,8 464,633,8 1443,485,4 1426,518,4 1460,512,4',
 p:['M0 598H280M0 455L105 425L125 500L45 520L10 460M15 595Q5 555 55 540M45 520L145 500Q165 540 160 595M145 485Q190 500 195 560M175 500L193 435L210 520L240 485L230 565L252 545L258 595M207 570V595M283 412Q270 450 310 480L440 535Q500 520 495 480L480 440L487 412M430 418L435 440L410 425M405 415Q370 420 370 450Q375 485 405 483Q435 480 437 455M580 412Q670 480 760 412M1005 412Q1050 460 1095 412M345 685Q360 580 450 575Q530 590 535 660Q535 690 510 690L360 702Q340 700 345 685M547 567L628 525L600 612L588 580Z',
 'M670 662Q670 620 735 570Q790 540 840 565Q890 600 892 665Q860 720 790 768Q740 770 705 745Q670 710 670 662M725 660Q730 625 790 608Q840 620 838 660Q810 710 765 712Q725 700 725 660M790 555L785 608M725 590L755 630M672 655L725 657M700 720L738 695M770 768L772 712M825 720L805 698M880 670L838 662M860 592L830 625M765 555Q770 517 790 517Q810 525 808 555M675 620Q640 615 640 640Q645 660 675 655M890 665Q925 660 920 685Q910 705 880 700M690 725Q610 760 620 785Q640 795 660 780L705 745M755 768Q760 795 775 797Q795 790 797 765',
 'M890 500Q890 460 980 460Q1080 460 1150 610Q1150 650 1050 655Q950 640 890 500M960 465L910 560M985 462L930 590M1105 530L1050 655M1125 560L1075 655M975 510L1070 560M995 500L980 530M1020 515L1003 545M1045 525L1028 558M1070 545L1055 575M1240 530Q1290 400 1380 405Q1500 430 1490 550Q1480 580 1455 572L1205 525Q1190 490 1210 440Q1230 410 1290 420M1420 385Q1490 400 1495 480M1240 505Q1220 440 1300 425M1240 655L1245 630L1290 625L1295 660Q1330 670 1340 700L1232 735Q1220 690 1240 665M1232 735L1250 800M1340 700L1405 685L1430 795M1335 690Q1340 620 1380 618Q1410 640 1405 685M1350 650L1365 655M1345 670L1360 675M1450 1080L1470 1100M1275 420Q1300 340 1420 385'],
 u:'bolt,88,737 cloud,260,733 cloud,985,760'},
{x:0,y:1680,
 s:'69,68 235,42 497,126 295,317 762,375 859,187 1096,405 1391,277',
 m:'652,357 1025,266 1397,150 532,25,10',
 p:['M105 150L150 15Q165 20 238 125L222 128L275 185L262 190L302 240Q290 255 250 240L242 270Q215 280 210 265Q190 290 175 265Q155 285 145 268L132 285L118 265L85 280Q90 250 105 215L90 213L118 150ZM175 275L182 343L235 333L220 275M135 140Q145 175 158 143M178 205Q190 235 205 205Q215 230 233 208M400 245Q480 220 540 310Q550 345 530 360Q470 330 455 300L400 260Q395 250 400 245M435 315Q360 350 357 380Q370 425 405 423Q450 400 465 345M415 290L435 295L440 315L465 300L480 350',
 'M275 0Q290 70 340 115L375 90L355 20M340 115L358 190L375 185L388 188L432 150V130L378 92M350 120L375 185M375 95L430 130M550 85L440 10M287 40L360 50M605 155Q560 200 590 250Q610 270 660 290L960 440Q1040 430 1045 370Q1040 330 1000 320Q880 285 680 155',
 'M1070 220L1190 155M1090 270L1280 160M1070 245L1215 155M1070 220V245L1090 270M1100 270Q1150 350 1215 348Q1290 330 1305 270Q1305 220 1275 155M1155 240L1175 330M1155 240L1250 325M1220 195L1250 325M1220 195L1305 260M1210 350L1240 420M1305 300L1380 385L1330 420M1360 355L1260 415M940 155L960 228L1007 212L990 155M1480 155Q1440 250 1445 345Q1460 360 1568 280M1520 155V250L1460 345M1520 250L1560 200M0 305Q10 325 42 332Q10 345 0 380M0 45Q30 90 0 205'],
 u:'pod,718,250,18 pod,922,355,18 plus,1470,400,20'},
{x:523,y:1680,s:'94,332 213,357',m:'131,248 57,412,33',
 p:['M215 260L300 240M215 260L325 415L400 400M100 155Q70 250 0 290M290 155L298 200M0 205L15 205L45 155M190 170L210 155M330 182L430 165'],u:''}
];
const ring = (t, r, k) => t.split(' ').filter(Boolean).map(q => { const [a, b, c] = q.split(','); return `<circle cx="${a}" cy="${b}" r="${c || r}"${k || ''}/>`; }).join('');
document.getElementById('doodles').innerHTML = cells.map(c =>
  `<g transform="translate(${c.x} ${c.y}) scale(.3342 .3333)">` + ring(c.s, 14) + ring(c.m, 25) +
  c.p.map(d => `<path d="${d}"/>`).join('') +
  (c.f || []).map(d => `<path class="fat" d="${d}"/><path class="core" d="${d}"/>`).join('') +
  c.u.split(' ').filter(Boolean).map(q => { const [n, a, b, r = 0, z = 1] = q.split(','); return `<path d="${small[n]}" transform="translate(${a} ${b}) rotate(${r}) scale(${z})"/>`; }).join('') +
  ring(c.c || '', 30, ' class="solid"') + (c.after ? `<path d="${c.after}"/>` : '') + '</g>').join('');
</script>
</body>
</html>
